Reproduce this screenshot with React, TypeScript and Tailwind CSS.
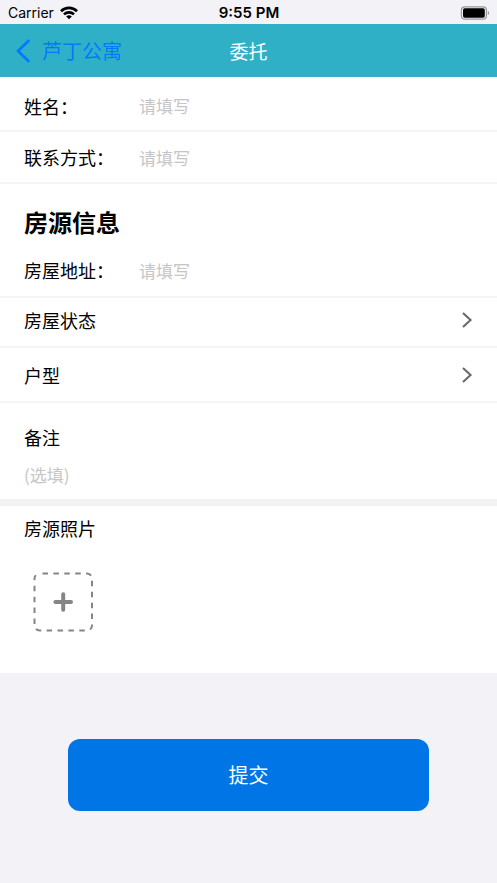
import React from "react";

function StatusBar() {
  return (
    <div className="grid h-6 grid-cols-3 items-center pr-[7px] pl-2 pt-px font-['Inter',sans-serif] text-[14px] leading-6 text-black">
      <div className="flex items-center gap-[6px]">
        <span>Carrier</span>
        <svg width="18" height="14" viewBox="0 0 18 14" fill="none" stroke="#000" strokeWidth="2.6" aria-hidden="true">
          <path d="M1 5.2a11.4 11.4 0 0 1 16 0" />
          <path d="M4 8.4a7.2 7.2 0 0 1 10 0" />
          <path d="M9 13.2 6.2 10.6a4 4 0 0 1 5.6 0Z" fill="#000" stroke="none" />
        </svg>
      </div>
      <span className="text-center text-[15px] leading-6 font-semibold">9:55 PM</span>
      <svg className="justify-self-end" width="30" height="14" viewBox="0 0 30 14" aria-hidden="true">
        <rect x="1.4" y="0.8" width="25" height="12.4" rx="3.4" fill="none" stroke="#98989b" strokeWidth="1.2" />
        <rect x="3" y="2.2" width="21.8" height="9.6" rx="1.8" fill="#000" />
        <path d="M27.8 4.8c1.8.8 1.8 3.6 0 4.4Z" fill="#98989b" />
      </svg>
    </div>
  );
}

function Header() {
  return (
    <header className="grid h-[53px] grid-cols-[1fr_auto_1fr] items-center bg-[#30b0c7] px-4">
      <button type="button" className="flex items-center gap-3 text-[20px] leading-7 text-[#007aff]">
        <svg width="14" height="24" viewBox="0 0 14 24" fill="none" stroke="currentColor" strokeWidth="2.8" strokeLinecap="round" strokeLinejoin="round" aria-hidden="true">
          <path d="M12.4 2 2 12l10.4 10" />
        </svg>
        <span>芦丁公寓</span>
      </button>
      <h1 className="text-[19px] leading-7 text-white">委托</h1>
    </header>
  );
}

function InputRow({ id, label, className }: { id: string; label: string; className: string }) {
  return (
    <div className={`flex items-center border-b-2 border-[#f5f5f6] px-6 ${className}`}>
      <label htmlFor={id} className="w-[115px] shrink-0 text-[18px] leading-7">
        {label}
      </label>
      <input
        id={id}
        placeholder="请填写"
        className="h-7 min-w-0 flex-1 bg-transparent text-[17px] outline-none placeholder:text-[#c5c5c7]"
      />
    </div>
  );
}

function PickerRow({ label, className }: { label: string; className: string }) {
  return (
    <button
      type="button"
      className={`flex w-full items-center justify-between border-b-2 border-[#f5f5f6] px-6 text-left text-[18px] leading-7 ${className}`}
    >
      <span>{label}</span>
      <svg width="12" height="18" viewBox="0 0 12 18" fill="none" stroke="#666" strokeWidth="2" aria-hidden="true">
        <path d="M2 2l7.6 7L2 16" />
      </svg>
    </button>
  );
}

export default function App() {
  return (
    <div className="min-h-screen bg-[#f2f2f7] font-['Noto_Sans_CJK_SC',sans-serif] text-black">
      <StatusBar />
      <Header />
      <form onSubmit={(e) => e.preventDefault()}>
        <div className="bg-white">
          <InputRow id="name" label="姓名：" className="h-[55px] pt-1" />
          <InputRow id="contact" label="联系方式：" className="h-[52px]" />
          <h2 className="px-6 pt-5 text-[24px] leading-9 font-bold">房源信息</h2>
          <InputRow id="address" label="房屋地址：" className="mt-1 h-[54px]" />
          <PickerRow label="房屋状态" className="h-[50px] pb-1" />
          <PickerRow label="户型" className="h-[55px]" />
          <div className="flex flex-col px-6 pt-5 pb-[11px]">
            <label htmlFor="remark" className="text-[18px] leading-7">
              备注
            </label>
            <input
              id="remark"
              placeholder="(选填)"
              className="mt-[9px] h-7 bg-transparent text-[17px] outline-none placeholder:text-[#c5c5c7]"
            />
          </div>
          <div className="h-[7px] bg-[#f2f2f4]" />
          <section className="px-6 pt-2 pb-10">
            <h3 className="text-[18px] leading-7">房源照片</h3>
            <button type="button" aria-label="添加照片" className="mt-[30px] ml-[9px] block">
              <svg width="61" height="61" viewBox="0 0 61 61" fill="none" stroke="#858585" aria-hidden="true">
                <rect x="1.5" y="1.5" width="57.5" height="57" rx="5" strokeWidth="2" strokeDasharray="5.5 5.4" strokeDashoffset="-3" />
                <path d="M30.2 22.2v15.6M22.4 30h15.6" strokeWidth="4" strokeLinecap="round" />
              </svg>
            </button>
          </section>
        </div>
        <div className="px-[68px] py-[66px]">
          <button type="submit" className="h-[72px] w-full rounded-xl bg-[#0075e6] text-[20px] leading-7 text-white">
            提交
          </button>
        </div>
      </form>
    </div>
  );
}
